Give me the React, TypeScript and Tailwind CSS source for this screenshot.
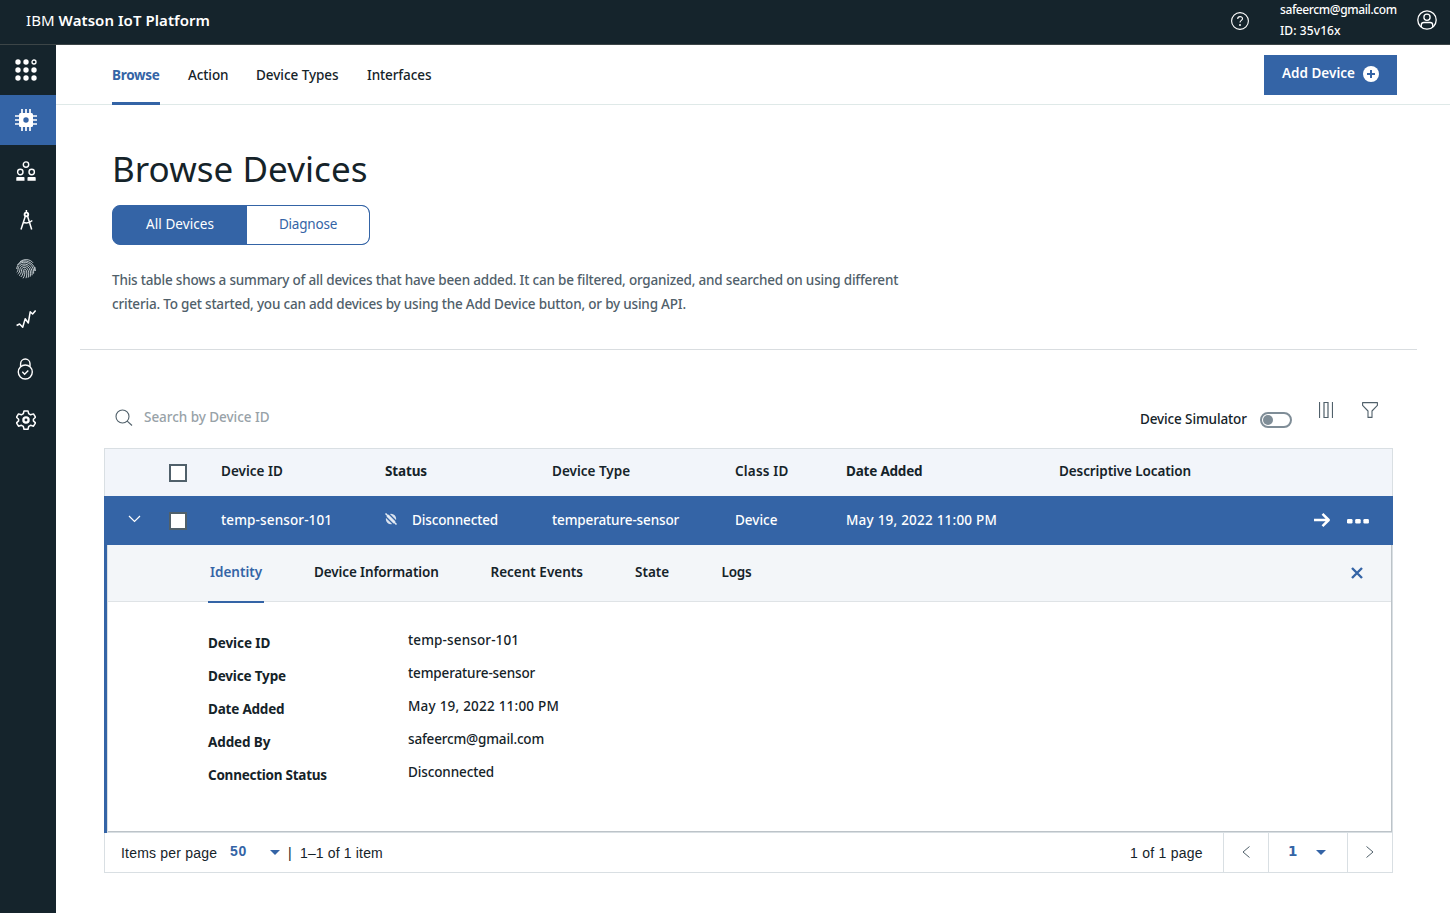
import React from "react";

const tabs = [
  { label: "Browse", cls: "w-[48px] font-bold tracking-[-0.3px] text-[#3464a6] border-[#3464a6]" },
  { label: "Action", cls: "w-[40px] font-medium tracking-[-0.1px] border-transparent" },
  { label: "Device Types", cls: "w-[83px] font-medium tracking-[-0.05px] border-transparent" },
  { label: "Interfaces", cls: "w-[65px] font-medium tracking-[-0.1px] border-transparent" },
];

const details = [
  { label: "Device ID", value: "temp-sensor-101", l: "tracking-[-0.1px]", v: "tracking-[0.13px]" },
  { label: "Device Type", value: "temperature-sensor", l: "tracking-[-0.17px]", v: "tracking-[-0.13px]" },
  { label: "Date Added", value: "May 19, 2022 11:00 PM", l: "tracking-[-0.2px]", v: "tracking-[0.22px]" },
  { label: "Added By", value: "safeercm@gmail.com", l: "tracking-[-0.12px]", v: "tracking-[-0.17px]" },
  { label: "Connection Status", value: "Disconnected", l: "tracking-[-0.25px]", v: "tracking-[-0.12px]" },
];

function AppsIcon() {
  const dots = [
    [3, 3], [11, 3], [3, 11], [11, 11], [19, 11], [3, 19], [11, 19], [19, 19],
  ];
  return (
    <svg width="22" height="22" viewBox="0 0 22 22" fill="#fff">
      {dots.map(([x, y]) => (
        <circle key={`${x}-${y}`} cx={x} cy={y} r="2.7" />
      ))}
      <circle cx="19" cy="3" r="2" fill="none" stroke="#fff" strokeWidth="1.3" />
    </svg>
  );
}

function ChipIcon() {
  return (
    <svg width="22" height="22" viewBox="0 0 22 22" fill="none" stroke="#fff" strokeWidth="1.7">
      <path d="M7 0v22M11 0v22M15 0v22M0 7h22M0 11h22M0 15h22" />
      <rect x="4" y="4" width="14" height="14" rx="1.5" fill="#fff" stroke="none" />
      <circle cx="11" cy="11" r="2.700" fill="#3464a6" stroke="none" />
    </svg>
  );
}

function MembersIcon() {
  return (
    <svg width="20" height="20" viewBox="0 0 20 20" fill="none" stroke="#fff" strokeWidth="1.4">
      <circle cx="10" cy="3.6" r="2.7" />
      <circle cx="4.3" cy="11" r="2.7" />
      <circle cx="15.7" cy="11" r="2.7" />
      <path d="M.3 19.700v-3q0-.8.8-.8h6.600q.8 0 .8.8v3zM11.500 19.700v-3q0-.8.8-.8h6.600q.8 0 .8.8v3z" fill="#fff" stroke="none" />
    </svg>
  );
}

function CompassIcon() {
  return (
    <svg width="20" height="20" viewBox="0 0 20 20" fill="none" stroke="#fff" strokeWidth="1.5">
      <path d="M10.400 0v3M9.400 6L5 19.500M11.500 6l4.200 13.500M7 12.200c3 1.200 6.500.8 9.300-1.700" />
      <circle cx="10.400" cy="4.400" r="1.800" strokeWidth="1.900" />
    </svg>
  );
}

function FingerprintIcon() {
  return (
    <svg width="20" height="20" viewBox="0 0 20 20" fill="none" stroke="#dfe6ea" strokeWidth=".85">
      <path d="M4 2.700C8-.3 14-.1 17 3.800M1.500 6C4 1.600 9.800.8 14 3.500c3.200 2 5 5 5 8.500M.7 10C1 4.500 6.500 2.300 11 3.700c5 1.700 7 6 6.600 11M.7 13.200c1.100-.7 1.200-1.700 1.300-3C2.400 6 7 4 11 5.600c4 1.700 5.600 5.600 5 10.700M1.700 15c1.600-1 2-2.600 2.200-4.500.4-4 5-4.800 8-2.600 2.600 2 3 5.600 2.300 9.800M3 16.700c2-1.400 2.400-3.600 2.600-5.800.3-3 4-3.400 5.800-1 1.600 2.200 1.600 5.300.8 8.700M4.800 18c2-1.700 2.400-4.100 2.600-6.600.2-1.700 2-1.700 2.800-.2 1 2.100.7 5-.2 8M7 19.300c1.600-2.200 2-4.800 1.800-7.800M18.900 8l.3 4" />
    </svg>
  );
}

function TrendIcon() {
  return (
    <svg width="20" height="20" viewBox="0 0 20 20" fill="none" stroke="#fff" strokeWidth="1.500" strokeLinejoin="round">
      <path d="M.6 16.500l3-1.500 3.100 3.200 2.500-8.500 3.100 4.300L14.200 2.800l2.400 2.200L19.600 1.500" />
    </svg>
  );
}

function LockIcon() {
  return (
    <svg width="20" height="22" viewBox="0 0 20 22" fill="none" stroke="#fff" strokeWidth="1.4">
      <circle cx="9.3" cy="14" r="7" />
      <path d="M4.600 8.600V5.700a4.700 4.700 0 0 1 9.400 0v2.900M6.300 13.800l2.300 2.400 3.700-3.800" />
    </svg>
  );
}

function GearIcon() {
  return (
    <svg width="20" height="20" viewBox="0 0 20 20" fill="none" stroke="#fff" strokeWidth="1.5" strokeLinejoin="round">
      <path d="M8 .9h4l.7 2.8 1.9 1.1 2.9-.9 2 3.3-2.1 2v1.7l2.1 2-2 3.3-2.9-.9-1.9 1.1-.7 2.8H8l-.7-2.8-1.9-1.1-2.9.9-2-3.3 2.1-2V9.200l-2.100-2 2-3.300 2.900.900 1.900-1.100z" />
      <circle cx="10" cy="10" r="2.600" strokeWidth="2.300" />
    </svg>
  );
}

const rail = [
  { name: "apps", icon: <AppsIcon />, cls: "" },
  { name: "devices", icon: <ChipIcon />, cls: "bg-[#3464a6]" },
  { name: "members", icon: <MembersIcon />, cls: "pt-px" },
  { name: "design", icon: <CompassIcon />, cls: "" },
  { name: "identity", icon: <FingerprintIcon />, cls: "pb-[2px]" },
  { name: "usage", icon: <TrendIcon />, cls: "pb-[3px]" },
  { name: "security", icon: <LockIcon />, cls: "pb-[2px]" },
  { name: "settings", icon: <GearIcon />, cls: "" },
];

function Caret() {
  return (
    <svg width="10" height="5" viewBox="0 0 10 5" className="shrink-0">
      <path d="M0 0h10L5 5z" fill="#3464a6" />
    </svg>
  );
}

const columns = "grid grid-cols-[65px_52px_164px_167px_183px_111px_213px_1fr]";

export default function App() {
  return (
    <div className="flex h-[913px] w-[1450px] flex-col overflow-hidden bg-white font-['Noto_Sans',sans-serif] text-[13.5px] leading-[20px] text-[#152329]">
      <header className="flex h-[45px] shrink-0 border-b border-[#3c4547] bg-[#15242c] text-white">
        <h1 className="ml-[26px] mt-[10px] text-[15px] leading-[20px] font-normal whitespace-nowrap tracking-[0.06px]">
          IBM <span className="font-semibold">Watson IoT Platform</span>
        </h1>
        <svg className="ml-auto mt-[12px]" width="18" height="18" viewBox="0 0 18 18" fill="none" stroke="#fff" strokeWidth="1.1">
          <circle cx="9" cy="9" r="8.4" />
          <path d="M6.700 6.900c0-3 4.800-3 4.800-.200 0 1.800-2.500 1.700-2.500 3.900" />
          <circle cx="9" cy="13" r=".4" fill="#fff" />
        </svg>
        <div className="ml-[31px] w-[137px] whitespace-nowrap text-[12px] leading-[21px] font-medium">
          <div className="-mt-px tracking-[-0.38px]">safeercm@gmail.com</div>
          <div className="tracking-[0.1px]">ID: 35v16x</div>
        </div>
        <svg className="mr-[13px] mt-[10px]" width="20" height="20" viewBox="0 0 20 20" fill="none" stroke="#fff" strokeWidth="1.300">
          <circle cx="10" cy="10" r="9.200" />
          <circle cx="10" cy="7.200" r="3.100" />
          <path d="M4.300 17v-2q0-2.500 2.500-2.500h6.400q2.500 0 2.500 2.500v2" />
        </svg>
      </header>

      <div className="flex min-h-0 flex-1">
        <nav className="w-[56px] shrink-0 bg-[#15242c]">
          {rail.map((item) => (
            <div key={item.name} className={`flex h-[50px] items-center justify-center pr-[5px] ${item.cls}`}>
              {item.icon}
            </div>
          ))}
        </nav>

        <main className="min-w-0 flex-1">
          <div className="flex h-[60px] justify-between border-b border-[#dfe9e8] pl-[56px] pr-[53px]">
            <div className="flex gap-[28px]">
              {tabs.map((tab) => (
                <div key={tab.label} className={`h-[60px] border-b-[3px] pt-[20px] whitespace-nowrap ${tab.cls}`}>
                  {tab.label}
                </div>
              ))}
            </div>
            <button className="mt-[10px] flex h-[40px] w-[133px] bg-[#3464a6] pl-[18px] pt-[8px] font-semibold text-white whitespace-nowrap">
              <span className="w-[81px] text-left">Add Device</span>
              <svg className="mt-[3px]" width="16" height="16" viewBox="0 0 16 16">
                <circle cx="8" cy="8" r="8" fill="#fff" />
                <path d="M8 4v8M4 8h8" stroke="#3464a6" strokeWidth="2" />
              </svg>
            </button>
          </div>

          <section className="pl-[56px]">
            <h2 className="mt-[40px] h-[48px] text-[35px] leading-[48px] tracking-[0.05px] whitespace-nowrap">Browse Devices</h2>
            <div className="mt-[12px] flex h-[40px] w-[258px] overflow-hidden rounded-[8px] border border-[#3464a6] bg-[#3464a6] text-center leading-[37px]">
              <div className="w-[134px] tracking-[0.08px] text-white">All Devices</div>
              <div className="flex-1 rounded-r-[7px] bg-white tracking-[-0.2px] text-[#3464a6]">Diagnose</div>
            </div>
            <p className="mt-[23px] leading-[24px] font-medium tracking-[-0.196px] text-[#50606a] whitespace-nowrap">
              This table shows a summary of all devices that have been added. It can be filtered, organized, and searched on using different
              <br />
              criteria. To get started, you can add devices by using the Add Device button, or by using API.
            </p>
          </section>
          <div className="ml-[24px] mt-[33px] h-px w-[1337px] bg-[#d9dde0]" />

          <div className="ml-[48px] mt-[40px] flex h-[58px] w-[1289px]">
            <svg className="ml-[11px] mt-[19px]" width="18" height="18" viewBox="0 0 18 18" fill="none" stroke="#50606a" strokeWidth="1.100">
              <circle cx="7.500" cy="7.500" r="6.500" />
              <path d="M12.200 12.200l4.800 4.300" />
            </svg>
            <span className="ml-[11px] mt-[17px] font-medium tracking-[-0.04px] text-[#98a2a8]">Search by Device ID</span>
            <div className="ml-auto flex">
              <span className="mt-[19px] w-[120px] font-medium tracking-[-0.13px] whitespace-nowrap">Device Simulator</span>
              <span className="mt-[22px] flex h-[16px] w-[32px] items-center rounded-full border-2 border-[#7f8d97] pl-px">
                <span className="size-[10px] rounded-full bg-[#7f8d97]" />
              </span>
              <svg className="ml-[27px] mt-[12px]" width="14" height="16" viewBox="0 0 14 16" fill="none" stroke="#50606a">
                <path d="M.5 0v16M13.500 0v16M5 .5h4v15H5z" strokeWidth="1.200" />
              </svg>
              <svg className="ml-[29px] mr-[15px] mt-[12px]" width="16" height="16" viewBox="0 0 16 16" fill="none" stroke="#50606a" strokeWidth="1.100" strokeLinejoin="round">
                <path d="M.6.6h14.800v2.800L10 9v6.400H6V9L.6 3.400z" />
              </svg>
            </div>
          </div>

          <div className="ml-[48px] w-[1289px]">
            <div className={`${columns} h-[48px] border border-b-0 border-[#d9dfe3] bg-[#f2f5fa] pt-[12px] font-semibold whitespace-nowrap`}>
              <span />
              <span className="-ml-px mt-[3px] size-[18px] border-2 border-[#50606a] bg-white" />
              <span className="-ml-px">Device ID</span>
              <span className="-ml-px font-bold tracking-[-0.15px]">Status</span>
              <span className="-ml-px">Device Type</span>
              <span className="-ml-px tracking-[0.2px]">Class ID</span>
              <span className="-ml-px font-bold tracking-[-0.2px]">Date Added</span>
              <span className="-ml-px tracking-[-0.1px]">Descriptive Location</span>
            </div>

            <div className={`${columns} h-[49px] bg-[#3464a6] pt-[14px] font-medium text-white whitespace-nowrap`}>
              <svg className="ml-[24px] mt-[5px]" width="13" height="8" viewBox="0 0 13 8" fill="none" stroke="#fff" strokeWidth="1.200">
                <path d="M1 1l5.500 5.500L12 1" />
              </svg>
              <span className="mt-[2px] size-[18px] border-2 border-[#50606a] bg-white" />
              <span className="tracking-[0.13px]">temp-sensor-101</span>
              <span className="flex tracking-[-0.12px]">
                <svg className="mr-[15px] mt-[3px] shrink-0" width="12" height="12" viewBox="0 0 12 12" fill="none">
                  <circle cx="6" cy="6" r="5.200" fill="#d9e2ee" />
                  <path d="M0 3l9 9M3 0l9 9" stroke="#3464a6" strokeWidth="1.300" />
                  <path d="M.5.5l11 11" stroke="#e6edf5" strokeWidth="1.500" />
                </svg>
                Disconnected
              </span>
              <span className="tracking-[-0.13px]">temperature-sensor</span>
              <span>Device</span>
              <span className="tracking-[0.22px]">May 19, 2022 11:00 PM</span>
              <span className="flex justify-end pr-[24px]">
                <svg className="mr-[16px] mt-[2px]" width="18" height="16" viewBox="0 0 18 16" fill="none" stroke="#fff" strokeWidth="2.500">
                  <path d="M1 8h14M9.500 1.800L15.700 8 9.500 14.200" strokeLinejoin="round" />
                </svg>
                <svg className="mt-[9px]" width="22" height="5" viewBox="0 0 22 5" fill="#fff">
                  <rect width="5.500" height="4.400" rx="1.200" />
                  <rect x="8.200" width="5.500" height="4.400" rx="1.200" />
                  <rect x="16.400" width="5.500" height="4.400" rx="1.200" />
                </svg>
              </span>
            </div>

            <div className="flex h-[288px] border-l-[3px] border-[#3464a6] bg-[#d9dfe3] pb-px pr-px pl-px">
              <div className="flex-1 border-r border-b border-[#bcc3c8] bg-white">
                <div className="flex h-[57px] border-b border-[#dfe3e6] bg-[#f3f6f9] pl-[100px] pt-[17px] font-semibold whitespace-nowrap">
                  <div className="h-[41px] w-[56px] border-b-2 border-[#3464a6] pl-[2px] text-[#3464a6]">Identity</div>
                  <div className="ml-[50px] w-[176.500px] tracking-[-0.12px]">Device Information</div>
                  <div className="w-[144.500px]">Recent Events</div>
                  <div className="w-[86.500px]">State</div>
                  <div className="tracking-[-0.2px]">Logs</div>
                  <svg className="ml-auto mr-[28px] mt-[5px]" width="12" height="12" viewBox="0 0 12 12" stroke="#3464a6" strokeWidth="2.400">
                    <path d="M1 1l10 10M11 1L1 11" />
                  </svg>
                </div>
                <dl className="pl-[100px] pt-[28px]">
                  {details.map((row) => (
                    <div key={row.label} className="flex h-[33px] whitespace-nowrap">
                      <dt className={`w-[200px] pt-[3px] font-bold ${row.l}`}>{row.label}</dt>
                      <dd className={`font-medium ${row.v}`}>{row.value}</dd>
                    </div>
                  ))}
                </dl>
              </div>
            </div>

            <div className="flex h-[40px] border border-t-0 border-[#d9dfe3] font-['Liberation_Sans',Arial,sans-serif] text-[14px] whitespace-nowrap">
              <span className="ml-[16px] mt-[10px] w-[109px] tracking-[0.200px]">Items per page</span>
              <span className="mt-[8px] w-[40px] font-bold text-[#3464a6] tracking-[0.700px]">50</span>
              <span className="mt-[17px] flex"><Caret /></span>
              <span className="ml-[8px] mt-[10px] w-[12px]">|</span>
              <span className="mt-[10px] tracking-[0.150px]">1–1 of 1 item</span>
              <span className="ml-auto mt-[10px] w-[93px] tracking-[0.250px]">1 of 1 page</span>
              <span className="flex w-[45px] items-center justify-center border-l border-[#d9dfe3] pb-px">
                <svg width="8" height="12" viewBox="0 0 8 12" fill="none" stroke="#50606a"><path d="M7.500.5L1 6l6.500 5.500" /></svg>
              </span>
              <span className="flex w-[79px] border-l border-[#d9dfe3] pl-[19px] pt-[8px]">
                <span className="w-[28px] font-['DejaVu_Sans',sans-serif] text-[13.5px] font-bold text-[#3464a6]">1</span>
                <span className="mt-[9px]"><Caret /></span>
              </span>
              <span className="flex w-[45px] items-center justify-center border-l border-[#d9dfe3] pb-px">
                <svg width="8" height="12" viewBox="0 0 8 12" fill="none" stroke="#50606a"><path d="M.5.5L7 6 .5 11.500" /></svg>
              </span>
            </div>
          </div>
        </main>
      </div>
    </div>
  );
}
